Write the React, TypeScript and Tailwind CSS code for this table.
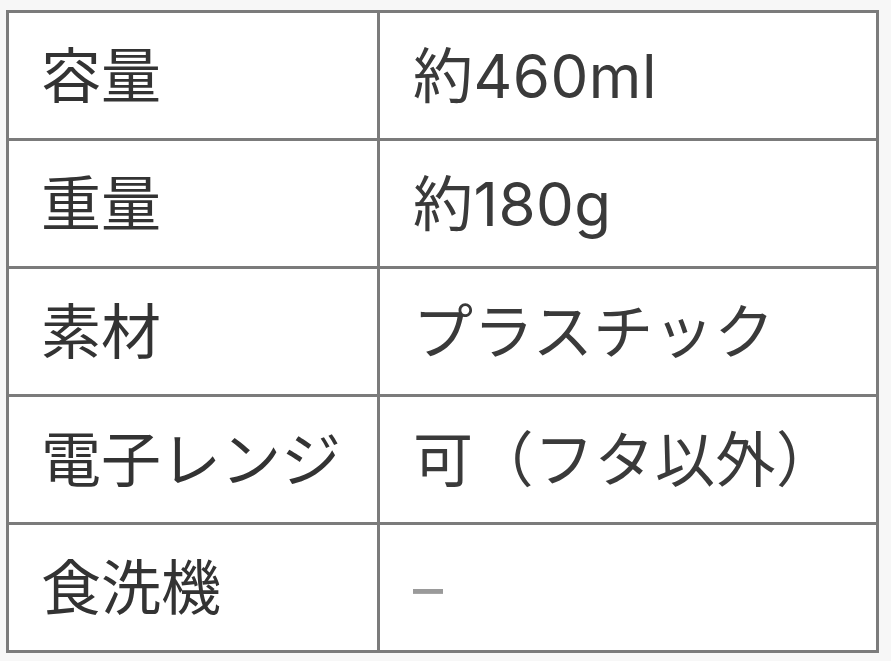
import React from "react";

const rows: [string, string][] = [
  ["容量", "約460ml"],
  ["重量", "約180g"],
  ["素材", "プラスチック"],
  ["電子レンジ", "可（フタ以外）"],
  ["食洗機", "–"],
];

const App = () => {
  return (
    <div
      className="w-[891px] h-[661px] bg-[#f7f7f7] pt-[10px] pl-[6px]"
      style={{ fontFamily: '"Inter", "Noto Sans CJK JP", sans-serif' }}
    >
      <table className="w-[873px] border-collapse bg-white border-[3px] border-[#7b7b7b]">
        <tbody>
          {rows.map(([label, value]) => (
            <tr key={label} className="h-[128px]">
              <td className="w-[371px] border-[3px] border-[#7b7b7b] pl-[32px] text-[60px] leading-none text-[#333]">
                {label}
              </td>
              <td
                className={`border-[3px] border-[#7b7b7b] pl-[33px] text-[60px] leading-none tracking-[0.5px] ${
                  value === "–" ? "text-[#9a9a9a]" : "text-[#3a3a3a]"
                }`}
              >
                {value}
              </td>
            </tr>
          ))}
        </tbody>
      </table>
    </div>
  );
};

export default App;
